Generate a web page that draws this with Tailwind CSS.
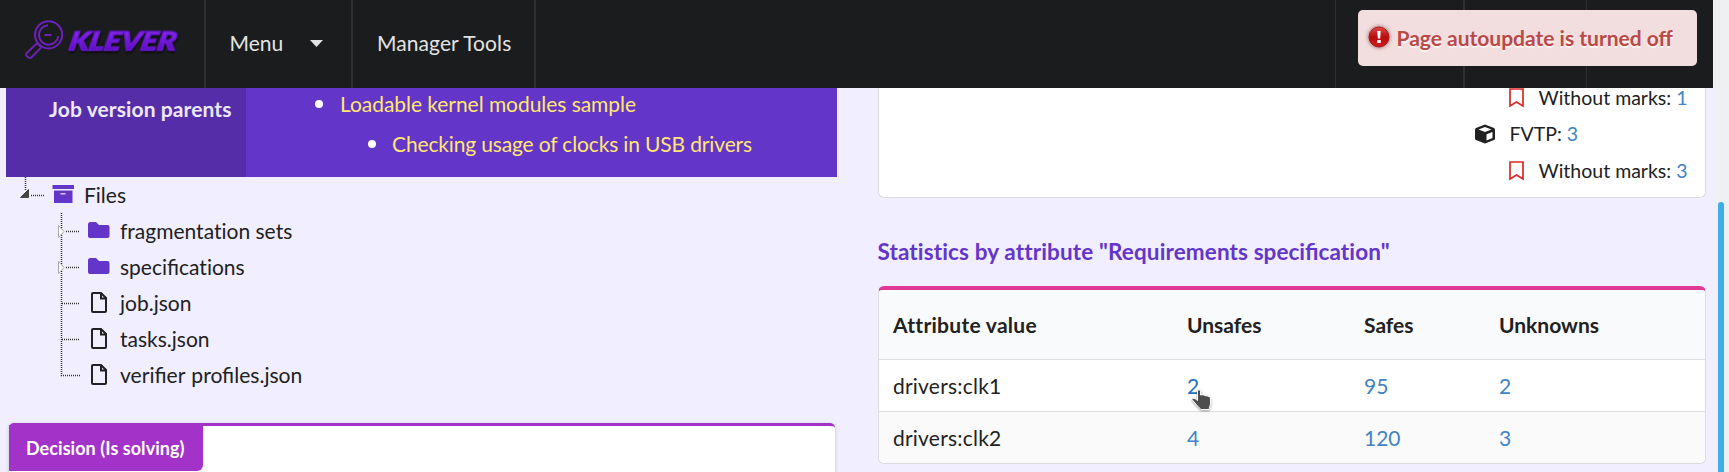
<!DOCTYPE html>
<html lang="en">
<head>
<meta charset="utf-8">
<title>Klever</title>
<script src="https://cdn.jsdelivr.net/npm/@tailwindcss/browser@4"></script>
</head>
<body class="flex h-[472px] w-[1729px] overflow-hidden bg-[#f0eeff] font-['Lato',sans-serif] text-[21px] leading-[36px] text-[#212121]">
<div class="relative flex h-[472px] w-[1713px] flex-col">
  <header class="flex h-[88px] shrink-0 items-center bg-[#1b1c1d] text-[#e3e3e3]">
    <div class="flex h-full w-[206px] items-center border-r-2 border-[#2e2f30]">
      <svg class="h-[88px] w-[200px]" viewBox="0 0 200 88" fill="none">
        <defs><linearGradient id="g" x1="0" y1="0" x2="0" y2="1"><stop offset="0.2" stop-color="#8a2be8"/><stop offset="0.8" stop-color="#5c0cc4"/></linearGradient></defs>
        <g stroke="#6c21b8" stroke-width="2">
          <circle cx="48.6" cy="34.8" r="13.6"/><path d="M48 25.300A9.700 9.700 0 1 0 58.300 36"/>
          <path d="M37 43.200 26.400 53.400c-.6.8-.6 1.700.2 2.500l1.500 1.400c1.200.9 2.600.9 3.500 0L41.700 46.900M36.500 42.500l5 5M44.500 35h7"/>
        </g>
        <text x="68" y="50.500" transform="translate(9 0) skewX(-10)" textLength="107" lengthAdjust="spacingAndGlyphs" fill="url(#g)" stroke="#6a16d2" stroke-width="1.5" class="text-[26px] font-black italic drop-shadow-[1px_2px_1px_rgba(0,0,0,0.6)]">KLEVER</text>
      </svg>
    </div>
    <div class="flex h-full w-[147px] items-center justify-between border-r-2 border-[#2e2f30] pr-[28px] pb-[2px] pl-[23.500px]"><span>Menu</span>
      <svg class="h-[7px] w-[13px]" viewBox="0 0 13 7"><path d="M0 0h13L6.500 7z" fill="#e3e3e3"/></svg></div>
    <div class="flex h-full w-[183px] items-center border-r-2 border-[#2e2f30] pb-[2px] pl-[24px] tracking-[0.08px] whitespace-nowrap">Manager Tools</div>
    <div class="h-full w-[800px] border-r border-[#2e2f30]"></div>
    <div class="h-full w-[129px] border-r-2 border-[#2e2f30]"></div>
    <div class="h-full w-[122px] border-r border-[#2e2f30]"></div>
  </header>

  <main class="flex h-[384px] pl-[6px]">
    <section class="flex w-[831px] flex-col">
      <div class="flex h-[89px] shrink-0 bg-[#6435c9]">
        <div class="w-[240px] bg-[#552da9] pt-[3px] pl-[43px] font-bold tracking-[0.1px] whitespace-nowrap text-[#ede8fa]">Job version parents</div>
        <div class="flex flex-col pl-[69px] leading-[40px] whitespace-nowrap text-[#ffe770]">
          <div class="-mt-[4px] flex items-center gap-[17px] tracking-[-0.05px]"><i class="size-[8px] rounded-full bg-white"></i>Loadable kernel modules sample</div>
          <div class="flex items-center gap-[16px] pl-[53px] tracking-[-0.15px]"><i class="size-[8px] rounded-full bg-white"></i>Checking usage of clocks in USB drivers</div>
        </div>
      </div>
      <div class="flex shrink-0 flex-col">
        <div class="flex h-[36px]">
          <svg class="h-[36px] w-[78px]" viewBox="6 177 78 36"><g stroke="#333" stroke-width="1.500" fill="none" stroke-dasharray="1 1"><path d="M25.500 177v14M31 195.500h13"/></g><path d="M20.500 197.500 28.500 189.500v8z" fill="#444" stroke="#444"/><path d="M52.500 185h21.500v4H52.500zM54 190.500h18.500V203H54z" fill="#6435c9"/><path d="M60.500 193.800h5" stroke="#f0eeff" stroke-width="1.200"/></svg><span>Files</span>
        </div>
        <div class="flex h-[36px]">
          <svg class="h-[36px] w-[114px]" viewBox="6 0 114 36"><g stroke="#333" stroke-width="1.500" fill="none" stroke-dasharray="1 1"><path d="M61.500 0v36M66 18.500h14"/></g><path d="M58.500 12.500v12l5.500-6z" fill="#fff" stroke="#aaa"/><path d="M88 11.500q0-2.500 2.500-2.500h5.500l3 3h8.500q2 0 2 2v9q0 2-2 2H90q-2 0-2-2z" fill="#6435c9"/></svg><span class="[font-variant-ligatures:none]">fragmentation sets</span>
        </div>
        <div class="flex h-[36px]">
          <svg class="h-[36px] w-[114px]" viewBox="6 0 114 36"><g stroke="#333" stroke-width="1.500" fill="none" stroke-dasharray="1 1"><path d="M61.500 0v36M66 18.500h14"/></g><path d="M58.500 12.500v12l5.500-6z" fill="#fff" stroke="#aaa"/><path d="M88 11.500q0-2.500 2.500-2.500h5.500l3 3h8.500q2 0 2 2v9q0 2-2 2H90q-2 0-2-2z" fill="#6435c9"/></svg><span>specifi<span class="[font-variant-ligatures:none]">cations</span></span>
        </div>
        <div class="flex h-[36px]">
          <svg class="h-[36px] w-[114px]" viewBox="6 0 114 36" fill="none"><path d="M61.500 0v36M62 18.500h18" stroke="#333" stroke-width="1.500" stroke-dasharray="1 1"/><path d="M93 8h8l5 5v13q0 1-1 1H93q-1 0-1-1V9q0-1 1-1M101 8v5.500h5" stroke="#212121" stroke-width="2"/></svg><span>job.json</span>
        </div>
        <div class="flex h-[36px]">
          <svg class="h-[36px] w-[114px]" viewBox="6 0 114 36" fill="none"><path d="M61.500 0v36M62 18.500h18" stroke="#333" stroke-width="1.500" stroke-dasharray="1 1"/><path d="M93 8h8l5 5v13q0 1-1 1H93q-1 0-1-1V9q0-1 1-1M101 8v5.500h5" stroke="#212121" stroke-width="2"/></svg><span>tasks.json</span>
        </div>
        <div class="flex h-[36px]">
          <svg class="h-[36px] w-[114px]" viewBox="6 0 114 36" fill="none"><path d="M61.500 0v18.500h18.500" stroke="#333" stroke-width="1.500" stroke-dasharray="1 1"/><path d="M93 8h8l5 5v13q0 1-1 1H93q-1 0-1-1V9q0-1 1-1M101 8v5.500h5" stroke="#212121" stroke-width="2"/></svg><span class="text-[21.1px] [word-spacing:1px]">verifier profiles.json</span>
        </div>
      </div>
      <div class="mt-[30px] ml-[3px] h-[70px] w-[826px] shrink-0 rounded-[5px] border-t-3 border-[#a333c8] bg-white shadow-[0_1px_3px_1px_#d4d4d5]">
        <div class="-mt-[1px] h-[46px] w-[194px] rounded-br-[6px] bg-[#a333c8] pt-[5px] pl-[17px] text-[18px] font-bold tracking-[0.05px] whitespace-nowrap text-white">Decision (Is solving)</div>
      </div>
    </section>

    <section class="ml-[41px] flex w-[828px] flex-col">
      <div class="flex h-[110px] shrink-0 flex-col items-end rounded-b-[6px] border border-t-0 border-[#dcdbe0] bg-white pr-[17.500px] text-[19.5px]">
        <div class="-mt-[8px] flex h-[36px] items-center gap-[15px]"><svg class="h-[20px] w-[15px]" viewBox="0 0 15 20"><path d="M1 1h13v17l-6.500-4L1 18z" fill="none" stroke="#db2828" stroke-width="1.700"/></svg><span>Without marks: <span class="text-[#4183c4]">1</span></span></div>
        <div class="flex h-[36px] w-[213px] items-center gap-[15px]"><svg class="h-[20px] w-[20px]" viewBox="0 0 20 20"><path d="M10 0.500 19 4q1 .5 1 1.500v9q0 1-1 1.500l-9 3.500L1 16q-1-.5-1-1.500v-9Q0 4.500 1 4z" fill="#212121"/><path d="M10 3 3.500 5.500 10 8l6.500-2.500zM11.500 10.300 17.500 8v6l-6 2.500z" fill="#fff"/></svg><span>FVTP: <span class="text-[#4183c4]">3</span></span></div>
        <div class="mt-[1px] flex h-[36px] items-center gap-[15px]"><svg class="h-[20px] w-[15px]" viewBox="0 0 15 20"><path d="M1 1h13v17l-6.500-4L1 18z" fill="none" stroke="#db2828" stroke-width="1.700"/></svg><span>Without marks: <span class="text-[#4183c4]">3</span></span></div>
      </div>
      <h2 class="mt-[36px] -ml-[0.5px] h-[52px] shrink-0 text-[22.5px] font-bold tracking-[0.13px] whitespace-nowrap text-[#6435c9] [font-variant-ligatures:none]">Statistics by attribute "Requirements <span class="tracking-normal [font-variant-ligatures:normal]">specifi</span>cation"</h2>
      <div class="h-[178px] shrink-0 overflow-hidden rounded-[6px] border border-t-4 border-[#dcdbe0] border-t-[#e03997] bg-white">
        <div class="grid h-[70px] grid-cols-[294px_177px_135px_1fr] items-center border-b border-[#dfdfe1] bg-[#f9fafb] pl-[14px] font-bold"><span class="tracking-[0.28px] [font-variant-ligatures:none]">Attribute value</span><span>Unsafes</span><span>Safes</span><span>Unknowns</span></div>
        <div class="grid h-[52px] grid-cols-[294px_177px_135px_1fr] items-center border-b border-[#dfdfe1] pl-[14px] text-[#4183c4]"><span class="tracking-[0.22px] text-[#212121]">drivers:clk1</span><span class="text-[#1e70bf]">2</span><span>95</span><span>2</span></div>
        <div class="grid h-[51px] grid-cols-[294px_177px_135px_1fr] items-center bg-[#fafafa] pl-[14px] text-[#4183c4]"><span class="tracking-[0.22px] text-[#212121]">drivers:clk2</span><span>4</span><span>120</span><span>3</span></div>
      </div>
    </section>
  </main>

  <div class="absolute top-[10px] left-[1358px] flex h-[56px] w-[339px] items-center rounded-[5px] bg-[#f2dede] pl-[8px] font-bold whitespace-nowrap text-[#b94a48]">
    <svg class="mr-[4.500px] h-[28px] w-[26px] drop-shadow-[0_0_2px_rgba(80,0,0,0.6)]" viewBox="0 0 26 28"><defs><linearGradient id="r" x1="0" y1="0" x2="0" y2="1"><stop stop-color="#e04a4a"/><stop offset=".5" stop-color="#b80d0d"/><stop offset="1" stop-color="#d31a1a"/></linearGradient></defs><circle cx="13" cy="13" r="10" fill="url(#r)" stroke="#a91c1c"/><path d="M11.300 7h3.400l-.5 7.500h-2.400zM11.300 16h3.400v3h-3.400z" fill="#fff"/></svg>
    <span class="[text-shadow:0_2px_1px_rgba(255,255,255,0.7)]">Page autoupdate is turned off</span>
  </div>
  <svg class="absolute top-[388px] left-[1190px] h-[24px] w-[24px] drop-shadow-[0_1px_1px_rgba(0,0,0,0.4)]" viewBox="0 0 24 24"><path d="M7.500 2.500q1.500-1.500 3 0v4.500l2.500-.3 2.500 1 2.500.3 2.500 1.500V16l-1.500 5.500h-8L7.500 18 2 11.500q1-2 3-1l2.500 2z" fill="#4d4d4d" stroke="#fff" stroke-width="1"/></svg>
</div>
<div class="h-[472px] w-[16px] bg-[#eff0f1] pt-[202px] pl-[5px]"><div class="h-[270px] w-[6px] rounded-t-full bg-[#3daee9]"></div></div>
</body>
</html>
